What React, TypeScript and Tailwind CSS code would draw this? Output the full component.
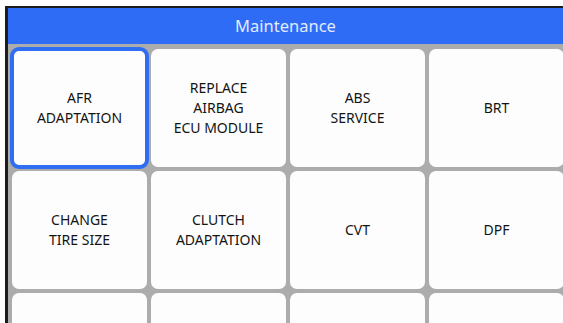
const items: string[][] = [
  ["AFR", "ADAPTATION"],
  ["REPLACE", "AIRBAG", "ECU MODULE"],
  ["ABS", "SERVICE"],
  ["BRT"],
  ["CHANGE", "TIRE SIZE"],
  ["CLUTCH", "ADAPTATION"],
  ["CVT"],
  ["DPF"],
  [],
  [],
  [],
  [],
];

const Tile = ({ lines, selected }: { lines: string[]; selected?: boolean }) => (
  <div
    className={
      selected
        ? "flex h-[118px] flex-col items-center justify-center rounded-[7px] border-2 border-[#2f6df2] bg-[#fdfdfd] text-[14px] leading-[20px] text-[#141414] ring-2 ring-[#2f6df2]"
        : "flex h-[118px] flex-col items-center justify-center rounded-[7px] bg-[#fdfdfd] text-[14px] leading-[20px] text-[#141414]"
    }
  >
    {lines.map((l) => (
      <span key={l}>{l}</span>
    ))}
  </div>
);

export default function App() {
  return (
    <div
      className="h-[323px] w-[563px] overflow-hidden bg-white pl-[5px] pt-[6px]"
      style={{ fontFamily: "'Noto Sans', 'Open Sans', sans-serif" }}
    >
      <div className="h-[400px] w-[600px] border-l-[3px] border-t-2 border-[#1c1c1c] bg-[#acacac]">
        <div className="flex h-[36px] w-full items-center bg-[#2e6cf6] text-[16.5px] text-[#e2eaff]">
          <span className="w-[555px] text-center">Maintenance</span>
        </div>
        <div className="grid w-[600px] grid-cols-[135px_135px_135px_135px] gap-[4px] pl-[4px] pt-[5px]">
          {items.map((lines, i) => (
            <Tile key={i} lines={lines} selected={i === 0} />
          ))}
        </div>
      </div>
    </div>
  );
}
